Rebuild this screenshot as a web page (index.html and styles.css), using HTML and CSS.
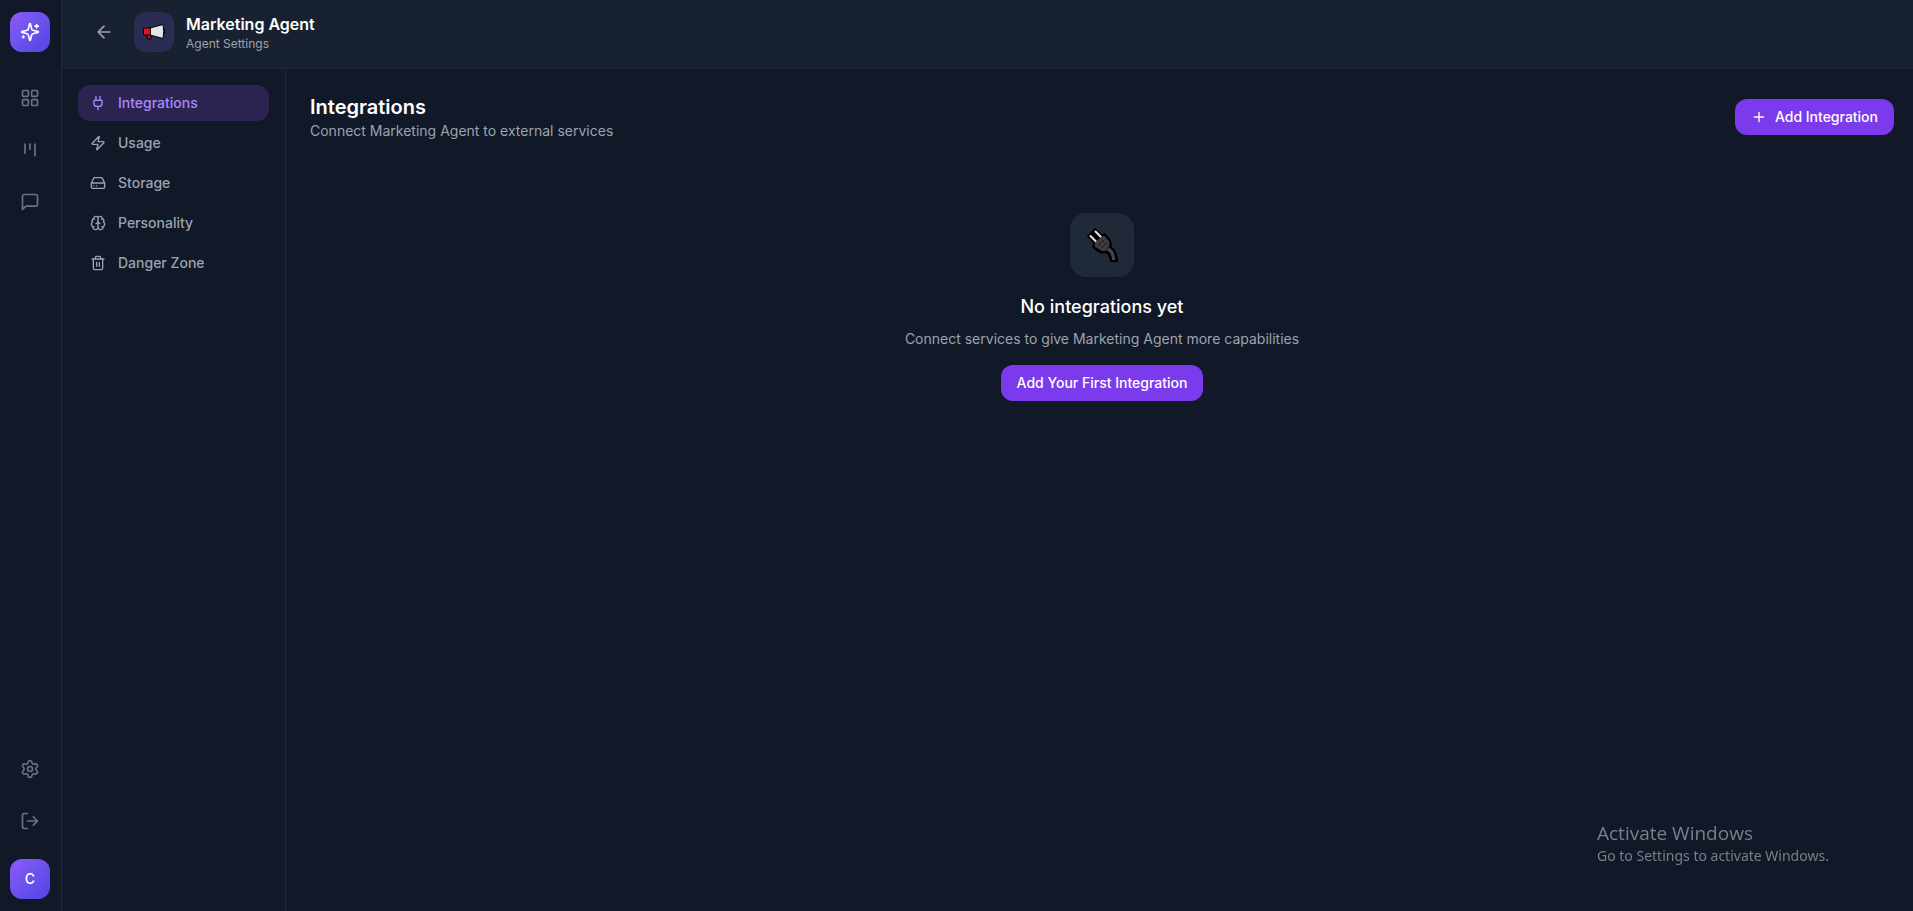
FILE: index.html
```
<!DOCTYPE html>
<html lang="en">
<head>
  <meta charset="UTF-8" />
  <title>Marketing Agent - Agent Settings</title>
  <meta name="viewport" content="width=device-width, initial-scale=1.0"/>
  <link rel="stylesheet" href="styles.css">
</head>
<body>

  <nav class="rail" aria-label="Main">
    <a href="#" class="tile logo" aria-label="Home">
      <svg class="icon-logo" viewBox="0 0 24 24"><path d="M9.937 15.5A2 2 0 0 0 8.5 14.063l-6.135-1.582a.5.5 0 0 1 0-.962L8.5 9.936A2 2 0 0 0 9.937 8.5l1.582-6.135a.5.5 0 0 1 .963 0L14.063 8.5A2 2 0 0 0 15.5 9.937l6.135 1.581a.5.5 0 0 1 0 .964L15.5 14.063a2 2 0 0 0-1.437 1.437l-1.582 6.135a.5.5 0 0 1-.963 0z"/><path d="M20 3v4M22 5h-4M4 17v2M5 18H3"/></svg>
    </a>
    <div class="rail-group">
      <a href="#" class="rail-link" aria-label="Dashboard">
        <svg viewBox="0 0 24 24"><rect x="3" y="3" width="7" height="7" rx="1"/><rect x="14" y="3" width="7" height="7" rx="1"/><rect x="14" y="14" width="7" height="7" rx="1"/><rect x="3" y="14" width="7" height="7" rx="1"/></svg>
      </a>
      <a href="#" class="rail-link" aria-label="Board">
        <svg viewBox="0 0 24 24"><path d="M6 5v11M12 5v6M18 5v14"/></svg>
      </a>
      <a href="#" class="rail-link" aria-label="Chat">
        <svg viewBox="0 0 24 24"><path d="M21 15a2 2 0 0 1-2 2H7l-4 4V5a2 2 0 0 1 2-2h14a2 2 0 0 1 2 2z"/></svg>
      </a>
    </div>
    <div class="rail-group rail-bottom">
      <a href="#" class="rail-link" aria-label="Settings">
        <svg viewBox="0 0 24 24"><path d="M9.671 4.136a2.34 2.34 0 0 1 4.659 0 2.34 2.34 0 0 0 3.319 1.915 2.34 2.34 0 0 1 2.33 4.033 2.34 2.34 0 0 0 0 3.831 2.34 2.34 0 0 1-2.33 4.033 2.34 2.34 0 0 0-3.319 1.915 2.34 2.34 0 0 1-4.659 0 2.34 2.34 0 0 0-3.32-1.915 2.34 2.34 0 0 1-2.33-4.033 2.34 2.34 0 0 0 0-3.831A2.34 2.34 0 0 1 6.35 6.051a2.34 2.34 0 0 0 3.319-1.915"/><circle cx="12" cy="12" r="3"/></svg>
      </a>
      <button type="button" class="rail-link" aria-label="Log out">
        <svg viewBox="0 0 24 24"><path d="M9 21H5a2 2 0 0 1-2-2V5a2 2 0 0 1 2-2h4M16 17l5-5-5-5M21 12H9"/></svg>
      </button>
    </div>
    <button type="button" class="tile user">C</button>
  </nav>

  <div class="page">
    <header class="topbar">
      <a href="#" class="back" aria-label="Back">
        <svg viewBox="0 0 24 24"><path d="m12 19-7-7 7-7M19 12H5"/></svg>
      </a>
      <div class="agent-icon">
        <svg viewBox="0 0 24 18">
          <path d="M5 11h4v5H6z" fill="#c50f1f" stroke="#000" stroke-width="1"/>
          <path d="M8 5 21 1.500q1.500 7 0 14L8 12z" fill="#e5e5e5" stroke="#000" stroke-width="1"/>
          <path d="M8 5H2.500q-1 0-1 1v5q0 1 1 1H8z" fill="#e81224" stroke="#000" stroke-width="1"/>
          <path d="M22.500 7v3" stroke="#000" stroke-width="1"/>
        </svg>
      </div>
      <div>
        <h1>Marketing Agent</h1>
        <p class="agent-sub">Agent Settings</p>
      </div>
    </header>

    <div class="body">
      <nav class="tabs" aria-label="Agent settings">
        <a href="#" class="tab active">
          <svg viewBox="0 0 24 24"><path d="M12 22v-5M9 8V2M15 8V2M18 8v5a4 4 0 0 1-4 4h-4a4 4 0 0 1-4-4V8Z"/></svg>
          Integrations
        </a>
        <a href="#" class="tab">
          <svg viewBox="0 0 24 24"><path d="M4 14a1 1 0 0 1-.78-1.630l9.900-10.200a.5.5 0 0 1 .86.46l-1.920 6.020A1 1 0 0 0 13 10h7a1 1 0 0 1 .78 1.630l-9.900 10.200a.5.5 0 0 1-.86-.46l1.920-6.020A1 1 0 0 0 11 14z"/></svg>
          Usage
        </a>
        <a href="#" class="tab">
          <svg viewBox="0 0 24 24"><path d="M22 12H2M5.450 5.110 2 12v6a2 2 0 0 0 2 2h16a2 2 0 0 0 2-2v-6l-3.450-6.890A2 2 0 0 0 16.760 4H7.240a2 2 0 0 0-1.790 1.110zM6 16h.01M10 16h.01"/></svg>
          Storage
        </a>
        <a href="#" class="tab">
          <svg viewBox="0 0 24 24"><path d="M12 18V5M15 13a4.170 4.170 0 0 1-3-4 4.170 4.170 0 0 1-3 4M17.598 6.500A3 3 0 1 0 12 5a3 3 0 1 0-5.598 1.500M17.997 5.125a4 4 0 0 1 2.526 5.770M18 18a4 4 0 0 0 2-7.464M19.967 17.483A4 4 0 1 1 12 18a4 4 0 1 1-7.967-.517M6 18a4 4 0 0 1-2-7.464M6.003 5.125a4 4 0 0 0-2.526 5.770"/></svg>
          Personality
        </a>
        <a href="#" class="tab">
          <svg viewBox="0 0 24 24"><path d="M3 6h18M19 6v14a2 2 0 0 1-2 2H7a2 2 0 0 1-2-2V6M8 6V4a2 2 0 0 1 2-2h4a2 2 0 0 1 2 2v2M10 11v6M14 11v6"/></svg>
          Danger Zone
        </a>
      </nav>

      <main>
        <div class="section-head">
          <div>
            <h2>Integrations</h2>
            <p>Connect Marketing Agent to external services</p>
          </div>
          <button type="button" class="btn">
            <svg viewBox="0 0 24 24"><path d="M5 12h14M12 5v14"/></svg>
            Add Integration
          </button>
        </div>

        <div class="empty">
          <div class="empty-icon">
            <svg viewBox="0 0 32 34">
              <path d="M9 0 1 8l6 7-1 4 4 4 6 3 3-1q5 3 5 9h8q0-10-6-15l-1-7-6-7-3 1z" fill="#000"/>
              <path d="M4.500 8 10 13.500M9.500 3.500 15 9" stroke="#e6e6e6" stroke-width="2"/>
              <path d="M8.500 15 15.500 8.500 18.500 8l5 6v4l-4 5h-3L9 19z" fill="#3d3d3d"/>
              <path d="m20.500 22 2.500-2.500q6.500 4 6 12.500h-3q0-7-5.500-10z" fill="#454545"/>
              <path d="m13 17 5-5M16 19.500l4.500-4.500" stroke="#111" stroke-width="1"/>
            </svg>
          </div>
          <h3>No integrations yet</h3>
          <p>Connect services to give Marketing Agent more capabilities</p>
          <button type="button" class="btn">Add Your First Integration</button>
        </div>
      </main>
    </div>
  </div>

  <div class="watermark">
    <p class="watermark-title">Activate Windows</p>
    <p class="watermark-text">Go to Settings to activate Windows.</p>
  </div>

</body>
</html>
```
FILE: styles.css
```
* {
  box-sizing: border-box;
}

body {
  font-family: Inter, "Liberation Sans", sans-serif;
  font-size: 14px;
  line-height: 20px;
  background: #111827;
  color: #9ca3af;
  margin: 0;
  display: flex;
  min-height: 100vh;
}

h1, h2, h3, p {
  margin: 0;
}

h1, h2, h3 {
  color: white;
  font-weight: 600;
}

a {
  color: inherit;
  text-decoration: none;
}

button {
  font: inherit;
  border: none;
  padding: 0;
  cursor: pointer;
}

svg {
  fill: none;
  stroke: currentColor;
  stroke-width: 2;
  stroke-linecap: round;
  stroke-linejoin: round;
  flex-shrink: 0;
}

/* left rail */
.rail {
  width: 62px;
  padding: 12px 10px;
  border-right: 1px solid #1f2937;
  display: flex;
  flex-direction: column;
  align-items: flex-start;
  flex-shrink: 0;
}

.tile {
  width: 40px;
  height: 40px;
  border-radius: 12px;
  background: linear-gradient(135deg, #8b5cf6, #4f46e5);
  color: white;
  display: flex;
  align-items: center;
  justify-content: center;
}

.logo {
  margin-bottom: 26px;
}

.icon-logo {
  width: 20px;
  height: 20px;
}

.user {
  font-weight: 500;
  margin-top: 18px;
}

.rail-group {
  display: flex;
  flex-direction: column;
  gap: 12px;
}

.rail-bottom {
  margin-top: auto;
}

.rail-link {
  width: 40px;
  height: 40px;
  background: none;
  border-radius: 12px;
  color: #6b7280;
  display: flex;
  align-items: center;
  justify-content: center;
}

.rail-link:hover {
  background: #1f2937;
}

.rail-link svg {
  width: 20px;
  height: 20px;
}

/* header */
.page {
  flex: 1;
  min-width: 0;
  display: flex;
  flex-direction: column;
}

.topbar {
  background: #18212f;
  border-bottom: 1px solid #1f2937;
  padding: 12px 24px 16px;
  display: flex;
  align-items: center;
}

.back {
  padding: 8px;
  margin-right: 12px;
  display: flex;
}

.back svg {
  width: 20px;
  height: 20px;
}

.agent-icon {
  width: 40px;
  height: 40px;
  border-radius: 12px;
  background: #2b2c54;
  margin-right: 12px;
  display: flex;
  align-items: center;
  justify-content: center;
}

.agent-icon svg {
  width: 24px;
  height: 18px;
}

h1 {
  font-size: 16px;
  line-height: 24px;
}

.agent-sub {
  font-size: 12px;
  line-height: 16px;
}

.body {
  flex: 1;
  display: flex;
}

/* settings tabs */
.tabs {
  width: 224px;
  padding: 16px;
  border-right: 1px solid #1f2937;
  display: flex;
  flex-direction: column;
  gap: 4px;
  flex-shrink: 0;
}

.tab {
  padding: 8px 12px;
  border-radius: 12px;
  font-weight: 500;
  display: flex;
  align-items: center;
  gap: 12px;
}

.tab svg {
  width: 16px;
  height: 16px;
}

.tab.active {
  background: #2c2450;
  color: #a78bfa;
}

/* content */
main {
  flex: 1;
  padding: 24px 19px 24px 24px;
}

.section-head {
  display: flex;
  align-items: center;
  justify-content: space-between;
  margin-bottom: 24px;
}

h2 {
  font-size: 20px;
  line-height: 28px;
}

.btn {
  background: #7c3aed;
  color: white;
  font-weight: 500;
  padding: 8px 16px;
  border-radius: 12px;
  display: flex;
  align-items: center;
  gap: 8px;
}

.btn:hover {
  background: #6d28d9;
}

.btn svg {
  width: 16px;
  height: 16px;
}

.empty {
  padding: 48px 0;
  display: flex;
  flex-direction: column;
  align-items: center;
}

.empty-icon {
  width: 64px;
  height: 64px;
  border-radius: 16px;
  background: #1f2937;
  margin-bottom: 16px;
  display: flex;
  align-items: center;
  justify-content: center;
}

.empty-icon svg {
  width: 32px;
  height: 34px;
  stroke: none;
}

h3 {
  font-size: 18px;
  font-weight: 500;
  line-height: 28px;
  margin-bottom: 8px;
}

.empty p {
  margin-bottom: 16px;
}

.watermark {
  position: fixed;
  right: 80px;
  bottom: 45px;
  min-width: 236px;
  font-family: "Open Sans", "Noto Sans", sans-serif;
  color: #7b7f87;
  pointer-events: none;
}

.watermark-title {
  font-size: 19px;
  line-height: 26px;
}

.watermark-text {
  font-family: "Noto Sans", sans-serif;
}
```
